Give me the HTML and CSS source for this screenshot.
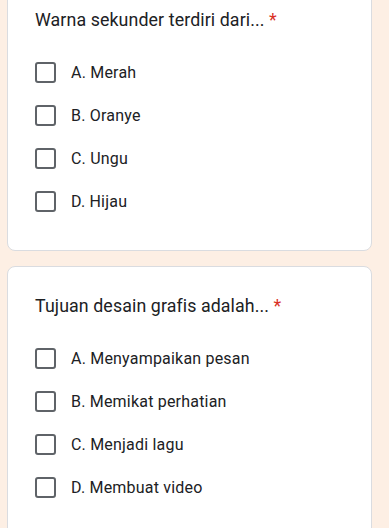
FILE: index.html
```html
<!DOCTYPE html>
<html lang="id">
<head>
<meta charset="utf-8">
<link rel="stylesheet" href="styles.css">
</head>
<body>
<div class="page">
  <section class="card first">
    <div class="title">Warna sekunder terdiri dari... <span class="req">*</span></div>
    <div class="options">
      <label class="opt"><span class="box"></span><span class="txt">A. Merah</span></label>
      <label class="opt"><span class="box"></span><span class="txt">B. Oranye</span></label>
      <label class="opt"><span class="box"></span><span class="txt">C. Ungu</span></label>
      <label class="opt"><span class="box"></span><span class="txt">D. Hijau</span></label>
    </div>
  </section>
  <section class="card">
    <div class="title">Tujuan desain grafis adalah... <span class="req">*</span></div>
    <div class="options">
      <label class="opt"><span class="box"></span><span class="txt">A. Menyampaikan pesan</span></label>
      <label class="opt"><span class="box"></span><span class="txt">B. Memikat perhatian</span></label>
      <label class="opt"><span class="box"></span><span class="txt">C. Menjadi lagu</span></label>
      <label class="opt"><span class="box"></span><span class="txt">D. Membuat video</span></label>
    </div>
  </section>
</div>
</body>
</html>
```

FILE: styles.css
```css
html, body {
  margin: 0;
  padding: 0;
  background: #fdefe4;
  font-family: Roboto, "Noto Sans", sans-serif;
  color: #202124;
  overflow: hidden;
}
.page {
  padding: 0 17px 0 7px;
  display: flex;
  flex-direction: column;
  gap: 15px;
}
.card {
  background: #fff;
  border: 1px solid #dadce0;
  border-radius: 8px;
  padding: 27px 27px 27px 27px;
}
.card.first {
  margin-top: -20px;
}
.title {
  font-size: 17.8px;
  line-height: 24px;
  letter-spacing: 0.1px;
}
.req {
  color: #d93025;
}
.options {
  margin-top: 19px;
  display: flex;
  flex-direction: column;
}
.opt {
  height: 43px;
  display: flex;
  align-items: center;
  gap: 15px;
}
.box {
  width: 17px;
  height: 17px;
  border: 2px solid #5f6368;
  border-radius: 3px;
  flex: none;
}
.txt {
  font-size: 16px;
  letter-spacing: 0.2px;
}
```
